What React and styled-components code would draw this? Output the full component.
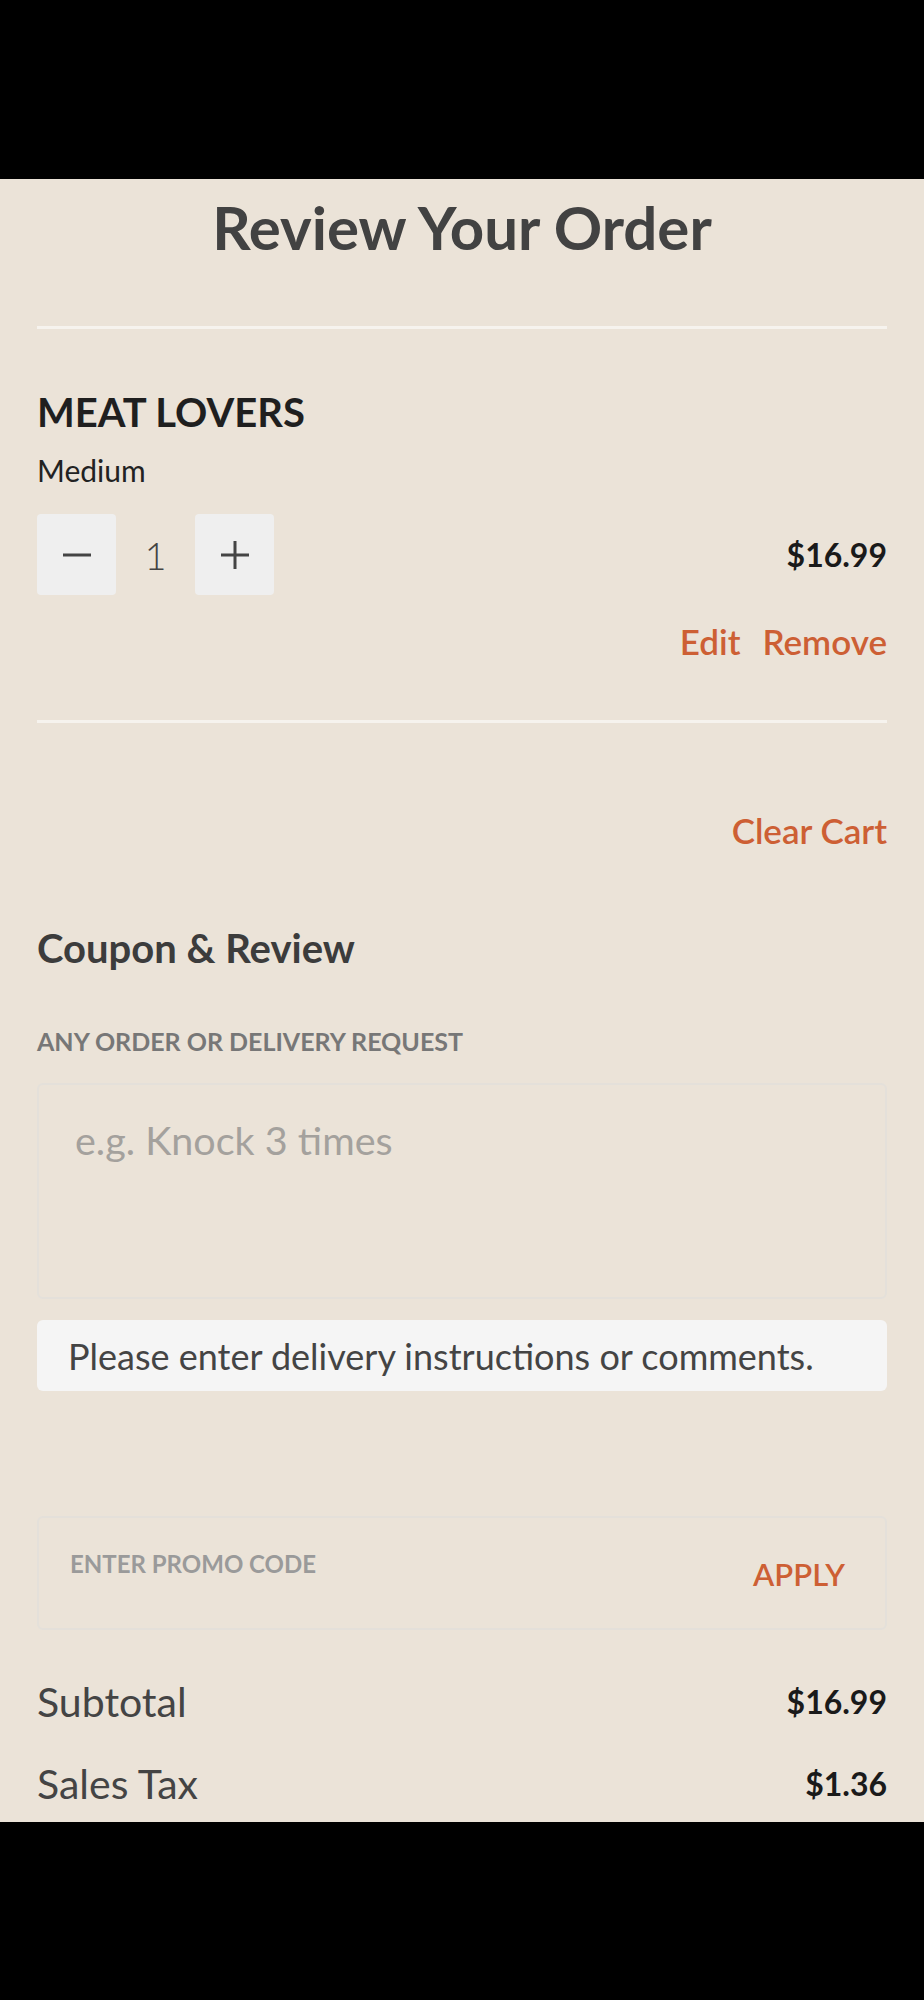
import React from 'react'
import styled, { createGlobalStyle } from 'styled-components'

const font = `Lato, "Liberation Sans", sans-serif`
const orange = '#cd5f34'

const Global = createGlobalStyle`
    body {
        margin: 0;
        background: #000;
        font-family: ${font};
    }
`

const Bar = styled.div`
    background: #000;
    height: ${(p) => p.h}px;
`

const Page = styled.div`
    background: #ebe3d8;
    padding: 8px 37px 11px;
    color: #222;
`

const Title = styled.h1`
    margin: 0;
    text-align: center;
    font-size: 60px;
    line-height: 80px;
    font-weight: 700;
    color: #424242;
`

const Divider = styled.hr`
    margin: ${(p) => p.top}px 0 0;
    border: none;
    height: 3px;
    background: #f6f3ee;
`

const ItemName = styled.h2`
    margin: 55px 0 0;
    font-size: 40px;
    line-height: 56px;
    font-weight: 700;
    color: #1f1f1f;
`

const Size = styled.div`
    margin-top: 10px;
    font-size: 30px;
    line-height: 40px;
    color: #222;
`

const QtyRow = styled.div`
    margin-top: 24px;
    display: flex;
    align-items: center;
    height: 81px;
`

const QtyButton = styled.button`
    width: 79px;
    height: 81px;
    border: none;
    border-radius: 4px;
    background: #efefef;
    display: flex;
    align-items: center;
    justify-content: center;
    padding: 0;
    color: #444;
`

const QtyValue = styled.span`
    width: 79px;
    text-align: center;
    font-size: 38px;
    font-weight: 300;
    color: #444;
`

const Price = styled.span`
    margin-left: auto;
    font-size: 32px;
    font-weight: 700;
    color: #1a1a1a;
`

const Actions = styled.div`
    margin-top: 21px;
    display: flex;
    justify-content: flex-end;
    gap: 22px;
`

const LinkText = styled.a`
    font-size: 35px;
    line-height: 50px;
    font-weight: 600;
    color: ${orange};
    text-decoration: none;
`

const ClearRow = styled.div`
    margin-top: 82px;
    display: flex;
    justify-content: flex-end;
`

const SectionTitle = styled.h3`
    margin: 65px 0 0;
    font-size: 40px;
    line-height: 56px;
    font-weight: 700;
    color: #3c3c3c;
`

const FieldLabel = styled.div`
    margin-top: 47px;
    font-size: 25px;
    line-height: 36px;
    font-weight: 700;
    color: #777;
    text-transform: uppercase;
`

const Notes = styled.textarea`
    display: block;
    box-sizing: border-box;
    margin-top: 24px;
    width: 100%;
    height: 216px;
    padding: 27px 36px;
    border: 2px solid #e4e0da;
    border-radius: 6px;
    background: transparent;
    resize: none;
    font-family: ${font};
    font-size: 39.5px;
    line-height: 56px;
    color: #333;

    &::placeholder {
        color: #a4a19d;
    }
`

const Message = styled.div`
    margin-top: 21px;
    height: 71px;
    display: flex;
    align-items: center;
    padding: 0 31px;
    border-radius: 6px;
    background: #f5f5f5;
    font-size: 36px;
    white-space: nowrap;
    color: #444;
`

const PromoBox = styled.div`
    margin-top: 125px;
    box-sizing: border-box;
    height: 114px;
    display: flex;
    align-items: center;
    padding: 0 40px 0 31px;
    border: 2px solid #e4e0da;
    border-radius: 6px;
`

const PromoInput = styled.input`
    flex: 1;
    align-self: flex-start;
    margin-top: 28px;
    border: none;
    background: transparent;
    outline: none;
    padding: 0;
    font-family: ${font};
    font-size: 24px;
    line-height: 36px;
    font-weight: 700;

    &::placeholder {
        color: #9a9a9a;
    }
`

const Apply = styled.button`
    border: none;
    background: transparent;
    padding: 0;
    margin-top: 2px;
    font-family: ${font};
    font-size: 31px;
    font-weight: 600;
    color: ${orange};
`

const TotalRow = styled.div`
    margin-top: ${(p) => p.top}px;
    display: flex;
    justify-content: space-between;
    align-items: center;
    height: 56px;
`

const TotalLabel = styled.span`
    font-size: 41px;
    color: #444;
`

const TotalValue = styled.span`
    font-size: 32px;
    font-weight: 700;
    color: #1a1a1a;
`

const Minus = () => (
    <svg width="32" height="32" viewBox="0 0 32 32">
        <path d="M2 16h28" stroke="currentColor" strokeWidth="3" />
    </svg>
)

const Plus = () => (
    <svg width="32" height="32" viewBox="0 0 32 32">
        <path d="M2 16h28M16 2v28" stroke="currentColor" strokeWidth="3" />
    </svg>
)

export default function App() {
    return (
        <>
            <Global />
            <Bar h={179} />
            <Page>
                <Title>Review Your Order</Title>
                <Divider top={59} />

                <ItemName>MEAT LOVERS</ItemName>
                <Size>Medium</Size>
                <QtyRow>
                    <QtyButton aria-label="decrease"><Minus /></QtyButton>
                    <QtyValue>1</QtyValue>
                    <QtyButton aria-label="increase"><Plus /></QtyButton>
                    <Price>$16.99</Price>
                </QtyRow>
                <Actions>
                    <LinkText href="#">Edit</LinkText>
                    <LinkText href="#">Remove</LinkText>
                </Actions>
                <Divider top={54} />

                <ClearRow>
                    <LinkText href="#">Clear Cart</LinkText>
                </ClearRow>

                <SectionTitle>Coupon &amp; Review</SectionTitle>
                <FieldLabel>Any order or delivery request</FieldLabel>
                <Notes placeholder="e.g. Knock 3 times" />
                <Message>Please enter delivery instructions or comments.</Message>

                <PromoBox>
                    <PromoInput placeholder="ENTER PROMO CODE" />
                    <Apply>APPLY</Apply>
                </PromoBox>

                <TotalRow top={43}>
                    <TotalLabel>Subtotal</TotalLabel>
                    <TotalValue>$16.99</TotalValue>
                </TotalRow>
                <TotalRow top={26}>
                    <TotalLabel>Sales Tax</TotalLabel>
                    <TotalValue>$1.36</TotalValue>
                </TotalRow>
            </Page>
            <Bar h={178} />
        </>
    )
}
